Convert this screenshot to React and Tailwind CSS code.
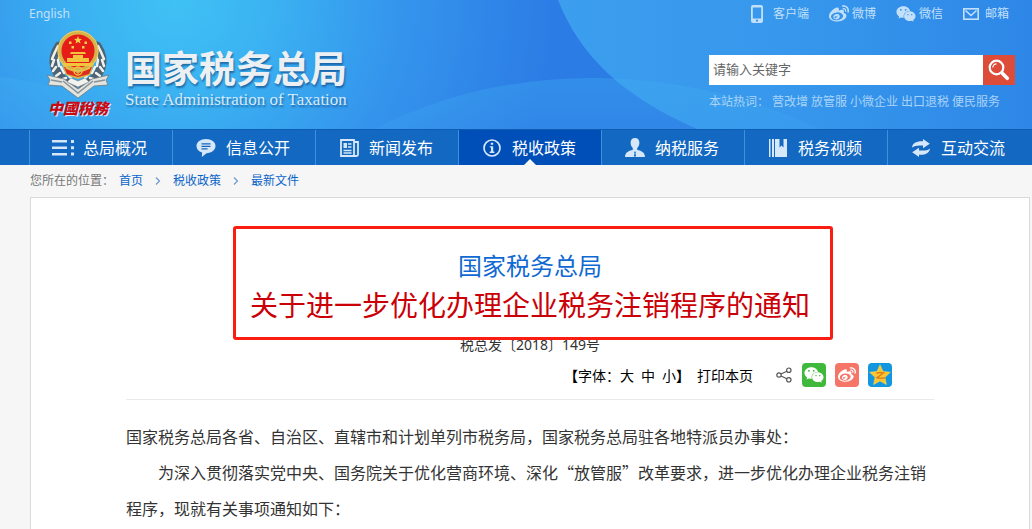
import React, {useState} from 'react';
import {FaWeixin, FaWeibo} from 'react-icons/fa';

const topLinks = [
    {label: '客户端', icon: PhoneIcon, gap: 'gap-[10px]'},
    {label: '微博', icon: WeiboIcon, gap: 'gap-[3px]'},
    {label: '微信', icon: WechatIcon, gap: 'gap-[3px]'},
    {label: '邮箱', icon: MailIcon, gap: 'gap-[6px]'},
];

const hotWords = ['营改增', '放管服', '小微企业', '出口退税', '便民服务'];

const navItems = [
    {label: '总局概况', icon: ListIcon},
    {label: '信息公开', icon: ChatIcon},
    {label: '新闻发布', icon: NewsIcon},
    {label: '税收政策', icon: InfoIcon, active: true},
    {label: '纳税服务', icon: PersonIcon},
    {label: '税务视频', icon: BookIcon},
    {label: '互动交流', icon: SwapIcon},
];

function PhoneIcon() {
    return (
        <svg width="12" height="18" viewBox="0 0 12 18" fill="currentColor" aria-hidden="true">
            <path fillRule="evenodd" d="M2 0h8a2 2 0 0 1 2 2v14a2 2 0 0 1-2 2H2a2 2 0 0 1-2-2V2a2 2 0 0 1 2-2zM1.8 2.6v10.9h8.4V2.6zM6 14.6a1.1 1.1 0 1 0 0 2.2 1.1 1.1 0 0 0 0-2.2z"/>
        </svg>
    );
}

function WeiboIcon() {
    return <FaWeibo size={20} aria-hidden="true"/>;
}

function WechatIcon() {
    return <FaWeixin size={20} aria-hidden="true"/>;
}

function MailIcon() {
    return (
        <svg width="16" height="12" viewBox="0 0 16 12" fill="none" stroke="currentColor" strokeWidth="1.6" aria-hidden="true">
            <rect x="0.8" y="0.8" width="14.4" height="10.4"/>
            <path d="M2.5 2.5 8 7.5l5.5-5"/>
        </svg>
    );
}

function ListIcon() {
    return (
        <svg width="24" height="18" viewBox="0 0 24 18" fill="currentColor" aria-hidden="true">
            <path d="M1 1h15v2.6H1zM1 7.5h15v2.6H1zM1 14h15v2.6H1zM20 1h3v3h-3zM20 7.3h3v3h-3zM20 13.6h3v3h-3z"/>
        </svg>
    );
}

function ChatIcon() {
    return (
        <svg width="20" height="18" viewBox="0 0 20 18" aria-hidden="true">
            <path fill="currentColor" d="M10 0c5.5 0 9.5 3 9.5 7s-4 7-9 7.2L5.8 18l.3-4.5C2.5 12.5.5 10 .5 7c0-4 4-7 9.5-7z"/>
            <path stroke="#1466bd" strokeWidth="1.2" d="M5.5 4.8h9M5.5 7.3h9M5.5 9.8h6"/>
        </svg>
    );
}

function NewsIcon() {
    return (
        <svg width="19" height="18" viewBox="0 0 19 18" fill="none" stroke="currentColor" aria-hidden="true">
            <path strokeWidth="1.8" d="M1 1h13v16H1zM14 3h4v12.5a1.5 1.5 0 0 1-1.5 1.5H12"/>
            <path strokeWidth="1.5" d="M3.5 11.5h8M3.5 14h8M8 5h3.5M8 8h3.5"/>
            <path fill="currentColor" stroke="none" d="M3.5 4H7v5H3.5z"/>
        </svg>
    );
}

function InfoIcon() {
    return (
        <svg width="18" height="18" viewBox="0 0 18 18" aria-hidden="true">
            <circle cx="9" cy="9" r="8" fill="none" stroke="currentColor" strokeWidth="1.7"/>
            <path fill="currentColor" d="M7.8 3.8h2.4v2H7.8zM6.8 7.2h3.4v5.4h1.2V14H6.7v-1.4H8v-4H6.8z"/>
        </svg>
    );
}

function PersonIcon() {
    return (
        <svg width="20" height="19" viewBox="0 0 20 19" fill="currentColor" aria-hidden="true">
            <path fillRule="evenodd" d="M10 0c2.8 0 4.4 1.9 4.4 4.6 0 2.3-.9 4.4-2.2 5.5v1.6c3.6 1 7.8 2.4 7.8 7.3H0c0-4.9 4.2-6.3 7.8-7.3v-1.6C6.5 9 5.6 6.9 5.6 4.6 5.6 1.9 7.2 0 10 0zM8.8 13.8l.8 1.2-.7 3.5h2.2l-.7-3.5.8-1.2z"/>
        </svg>
    );
}

function BookIcon() {
    return (
        <svg width="18" height="18" viewBox="0 0 18 18" fill="currentColor" aria-hidden="true">
            <path d="M0 0h1.5v18H0zM3 0h2v18H3zM6 0h4.5v8.5l2-2 2 2V0H18v18H6z"/>
        </svg>
    );
}

function SwapIcon() {
    return (
        <svg width="18" height="18" viewBox="0 0 18 18" fill="currentColor" aria-hidden="true">
            <path d="M0 8.6C.5 4.2 4.5 2 11 2.3V0l6.8 4.8L11 9.3V6.6C6 6.1 2.5 6.6 0 8.6z"/>
            <path d="M18 9.4c-.5 4.4-4.5 6.6-11 6.300V18L.2 13.2 7 8.700v2.700c5 .5 8.500 0 11-2z"/>
        </svg>
    );
}

function ShareIcon() {
    return (
        <svg width="16" height="16" viewBox="0 0 16 16" fill="none" stroke="#555" strokeWidth="1.2" aria-hidden="true">
            <circle cx="3" cy="8" r="2.2"/>
            <circle cx="12.8" cy="3.2" r="2.2"/>
            <circle cx="12.8" cy="12.8" r="2.2"/>
            <path d="m5 7 5.8-2.8M5 9l5.8 2.8"/>
        </svg>
    );
}

function QzoneIcon() {
    return (
        <svg width="22" height="22" viewBox="0 0 22 22" aria-hidden="true">
            <path fill="#fdc52d" stroke="#fdd75a" strokeWidth="0.6" d="m11 .8 3 6.700 7.300.8-5.400 5 1.500 7.200L11 16.900l-6.400 3.600 1.500-7.200-5.400-5L8 7.500z"/>
            <path fill="none" stroke="#d9781a" strokeWidth="1.3" d="M7.5 9c2.400-.4 4.500-.4 7 0L8 13.800c2.700.6 5 .6 8 0"/>
        </svg>
    );
}

const Emblem = () => (
    <svg width="64" height="70" viewBox="0 0 64 70" aria-hidden="true">
        {/* Wheat ears */}
        <g fill="none" strokeLinecap="round">
            <path stroke="#4d6272" strokeWidth="9" d="M13 17C3 32 8 48 27 57M51 17c10 15 5 31-14 40"/>
            <path stroke="#f1f1ec" strokeWidth="2.5" d="m12 17-3 6M9 23l-3 7M8 31l-2 6M10 38l-3 4M14 44l-4 3M20 49l-6 2M14 22l-1 7M12 31l1 6M15 38l3 6M20 43l5 6M52 17l3 6M55 23l3 7M56 31l2 6M54 38l3 4M50 44l4 3M44 49l6 2M50 22l1 7M52 31l-1 6M49 38l-3 6M44 43l-5 6"/>
        </g>
        {/* Ribbon */}
        <path fill="#e4e4df" stroke="#6d7880" strokeWidth="0.8" d="M1 46l17 4 14 10 14-10 17-4-3 5 2 5-14 1-16 12L16 57 2 56l2-5z"/>
        <path fill="none" stroke="#87929a" strokeWidth="1.5" d="m17 52 15 12 15-12M5 51l11 2M59 51l-11 2"/>
        <path fill="#f3f3f0" stroke="#7c858b" strokeWidth="0.6" d="m25 49 7 3 7-3 4 4-11 5-11-5z"/>
        {/* Disc */}
        <path fill="#d9b347" d="M16 35h32l-4 11-12 4-12-4z"/>
        <path fill="#df2a1f" d="m18 38 8 2 6 5 6-5 8-2-3 7-11 3-11-3z"/>
        <circle cx="32" cy="22" r="18.5" fill="#e51c17" stroke="#d8b348" strokeWidth="4"/>
        <circle cx="32" cy="22" r="20" fill="none" stroke="#efd477" strokeWidth="0.8"/>
        <path fill="#f7d04a" d="m32 7 1.100 2.700 2.900.2-2.200 1.900.7 2.800-2.500-1.500-2.500 1.500.7-2.800L28 9.900l2.900-.2zM23 12.500h2.500V15H23zM38.500 12.500H41V15h-2.500zM25.500 17H28v2.500h-2.500zM36 17h2.500v2.500H36z"/>
        <path fill="#f3c53f" d="M25 23h14l1 2H24zM27 26h10v3h6v4H21v-4h6zM17 34h30l-2 3H19z"/>
        <circle cx="32" cy="42" r="4" fill="none" stroke="#f3c53f" strokeWidth="1.5"/>
        <path stroke="#e7bd45" strokeWidth="1.5" d="M20 39l8 3M44 39l-8 3"/>
    </svg>
);

const HeaderBackdrop = () => (
    <svg className="absolute inset-0 h-full w-full" viewBox="0 0 1032 129" preserveAspectRatio="none" aria-hidden="true">
        <defs>
            <radialGradient id="glow" gradientUnits="userSpaceOnUse" cx="175" cy="0" r="380">
                <stop offset="0" stopColor="#3fc1f4"/>
                <stop offset="0.25" stopColor="#3bb2f2"/>
                <stop offset="0.6" stopColor="#3494ec"/>
                <stop offset="1" stopColor="#2c7ce5"/>
            </radialGradient>
            <linearGradient id="sweep" x1="0" x2="1" y1="0" y2="0">
                <stop offset="0" stopColor="#3c9eee"/>
                <stop offset="0.5" stopColor="#3697ec"/>
                <stop offset="1" stopColor="#2e87e7"/>
            </linearGradient>
            <linearGradient id="hill" x1="0" x2="0" y1="0" y2="1">
                <stop offset="0" stopColor="#3fb0f2" stopOpacity="0.35"/>
                <stop offset="1" stopColor="#3fa5f0" stopOpacity="0.25"/>
            </linearGradient>
        </defs>
        <path fill="url(#glow)" d="M0 0h1032v129H0z"/>
        <path fill="url(#sweep)" d="M558 0C580 55 620 95 697 129h335V0z"/>
        <path fill="url(#hill)" d="M375 129c130-68 300-68 445 0zM0 77c60 6 105 26 135 52H0z"/>
    </svg>
);

const Header = () => {
    const [keyword, setKeyword] = useState('');

    return (
        <header className="relative bg-[#2f88e8] text-[#c3e0fa]">
            <HeaderBackdrop/>
            <div className="relative flex h-[129px] justify-between pl-[29px] pr-[17px]">
                <div>
                    <a href="#english" className="block pt-[5px] text-[12px] leading-[18px]">English</a>
                    <div className="flex pl-[17px] pt-[6px]">
                        <div className="flex flex-col items-center">
                            <Emblem/>
                            <span className="-mt-px font-['Liberation_Serif','Noto_Sans_CJK_TC',serif] text-[15px] font-black italic leading-[22px] text-[#c80b12] [text-shadow:1px_1px_0_#d5eafa]">中國稅務</span>
                        </div>
                        <div className="pl-[15px] pt-4 [text-shadow:1px_2px_2px_rgba(10,60,120,0.6)]">
                            <h1 className="font-['Noto_Sans_CJK_SC',sans-serif] text-[37px] font-bold leading-[45px] text-[#ecf0f3]">国家税务总局</h1>
                            <p className="font-['Liberation_Serif',serif] text-[17px] leading-5 text-[#d7ebfa]">State Administration of Taxation</p>
                        </div>
                    </div>
                </div>

                <div className="w-[306px] text-[12px]">
                    <ul className="flex h-[27px] items-center justify-end gap-5 pr-[6px]">
                        {topLinks.map(({label, icon: Icon, gap}) => (
                            <li key={label}>
                                <a href="#top" className={`flex items-center ${gap}`}>
                                    <Icon/>
                                    {label}
                                </a>
                            </li>
                        ))}
                    </ul>
                    <form className="mt-7 flex h-[30px]" onSubmit={(e) => e.preventDefault()}>
                        <input
                            type="text"
                            aria-label="请输入关键字"
                            placeholder="请输入关键字"
                            value={keyword}
                            onChange={(e) => setKeyword(e.target.value)}
                            className="min-w-0 flex-1 bg-white px-1 text-[13px] text-[#333] outline-none placeholder:text-[#666]"
                        />
                        <button type="submit" aria-label="搜索" className="flex w-8 items-center justify-center bg-[#dd4b39] text-white">
                            <svg width="22" height="22" viewBox="0 0 22 22" fill="none" stroke="currentColor" aria-hidden="true">
                                <circle cx="8.5" cy="8.5" r="6.8" strokeWidth="2.2"/>
                                <path strokeWidth="1.2" d="M4.8 8.5a3.7 3.7 0 0 1 3.7-3.7"/>
                                <path strokeWidth="3.6" strokeLinecap="round" d="m14.5 14.5 4.8 4.8"/>
                            </svg>
                        </button>
                    </form>
                    <p className="flex gap-[3px] whitespace-nowrap pt-2 leading-[18px] text-[#a9d3f8]">
                        <span>本站热词：</span>
                        {hotWords.map((word) => (
                            <a key={word} href="#hot">{word}</a>
                        ))}
                    </p>
                </div>
            </div>
        </header>
    );
};

const Nav = () => (
    <nav className="border-t border-[#0f5db3] bg-[#1368c1] pl-[29px] pr-0.5 text-[16px]">
        <ul className="flex h-[35px]">
            {navItems.map(({label, icon: Icon, active}) => (
                <li key={label} className={`relative flex-1 border-l border-[#3b93dd] ${active ? 'bg-[#004fb9]' : ''}`}>
                    <a href="#nav" className="flex h-full items-center text-white">
                        <span className="flex w-[53px] justify-end pr-2 text-[#d5e7f8]">
                            <span className="flex w-6 justify-center"><Icon/></span>
                        </span>
                        <span>{label}</span>
                    </a>
                    {active && (
                        <span className="absolute bottom-0 left-1/2 h-0 w-0 -translate-x-1/2 border-x-[6px] border-b-[6px] border-x-transparent border-b-[#f6f6f6]"/>
                    )}
                </li>
            ))}
        </ul>
    </nav>
);

const Breadcrumb = () => (
    <div className="flex h-8 items-center pl-[30px] text-[12px] text-[#777]">
        <span className="pr-[5px]">您所在的位置：</span>
        {['首页', '税收政策', '最新文件'].map((item, i) => (
            <React.Fragment key={item}>
                {i > 0 && (
                    <svg className="mx-3 h-2 w-1.5" viewBox="0 0 5 8" fill="none" stroke="#6b9bd1" strokeWidth="1.2" aria-hidden="true">
                        <path d="m.5.5 3.5 3.5L.5 7.5"/>
                    </svg>
                )}
                <a href="#crumb" className="text-[#0a64c8]">{item}</a>
            </React.Fragment>
        ))}
    </div>
);

const Toolbar = () => (
    <div className="flex h-9 items-center justify-end pr-[42px] text-[14px] text-black">
        <div className="flex items-center">
            <span className="font-bold">【</span>
            <span>字体：</span>
            <button type="button">大</button>
            <button type="button" className="mx-[7px]">中</button>
            <button type="button">小</button>
            <span className="font-bold">】</span>
        </div>
        <button type="button" className="ml-[7px] mr-[23px]">打印本页</button>
        <button type="button" aria-label="分享" className="mr-[10px]"><ShareIcon/></button>
        <div className="flex gap-[9px]">
            <button type="button" aria-label="微信" className="flex h-6 w-6 items-center justify-center rounded-sm bg-[#3eb93b] text-white">
                <FaWeixin size={20}/>
            </button>
            <button type="button" aria-label="微博" className="flex h-6 w-6 items-center justify-center rounded-sm bg-[#f57567] text-white">
                <FaWeibo size={18}/>
            </button>
            <button type="button" aria-label="QQ空间" className="flex h-6 w-6 items-center justify-center rounded-sm bg-[#1296e0]">
                <QzoneIcon/>
            </button>
        </div>
    </div>
);

const Article = () => (
    <main className="ml-[30px] mr-0.5 border border-b-0 border-[#dadada] bg-white px-[95px]">
        <div className="relative pt-[49px] text-center">
            <h2>
                <span className="block text-[24px] leading-[38px] text-[#0f69d2]">国家税务总局</span>
                <span className="block text-[28px] leading-[40px] text-[#cb0006]">关于进一步优化办理企业税务注销程序的通知</span>
            </h2>
            <p className="pt-2 text-[14px] leading-[24px] text-[#333]">税总发〔2018〕149号</p>
            <div className="pointer-events-none absolute left-[107px] right-[101px] top-7 h-[114px] rounded-[3px] border-[3px] border-[#fb1d12]"/>
        </div>
        <Toolbar/>
        <div className="mt-[6px] border-t border-[#e9e9e9] pb-[3px] pt-[18px] font-['Noto_Sans_CJK_SC',sans-serif] text-[16px] leading-9 text-[#333]">
            <p>国家税务总局各省、自治区、直辖市和计划单列市税务局，国家税务总局驻各地特派员办事处：</p>
            <p className="indent-[32px]">为深入贯彻落实党中央、国务院关于优化营商环境、深化“放管服”改革要求，进一步优化办理企业税务注销程序，现就有关事项通知如下：</p>
        </div>
    </main>
);

export default function App() {
    return (
        <div lang="zh-CN" className="min-h-screen bg-[#f6f6f6] font-['Noto_Sans','Noto_Sans_CJK_SC',sans-serif]">
            <Header/>
            <Nav/>
            <Breadcrumb/>
            <Article/>
        </div>
    );
}
